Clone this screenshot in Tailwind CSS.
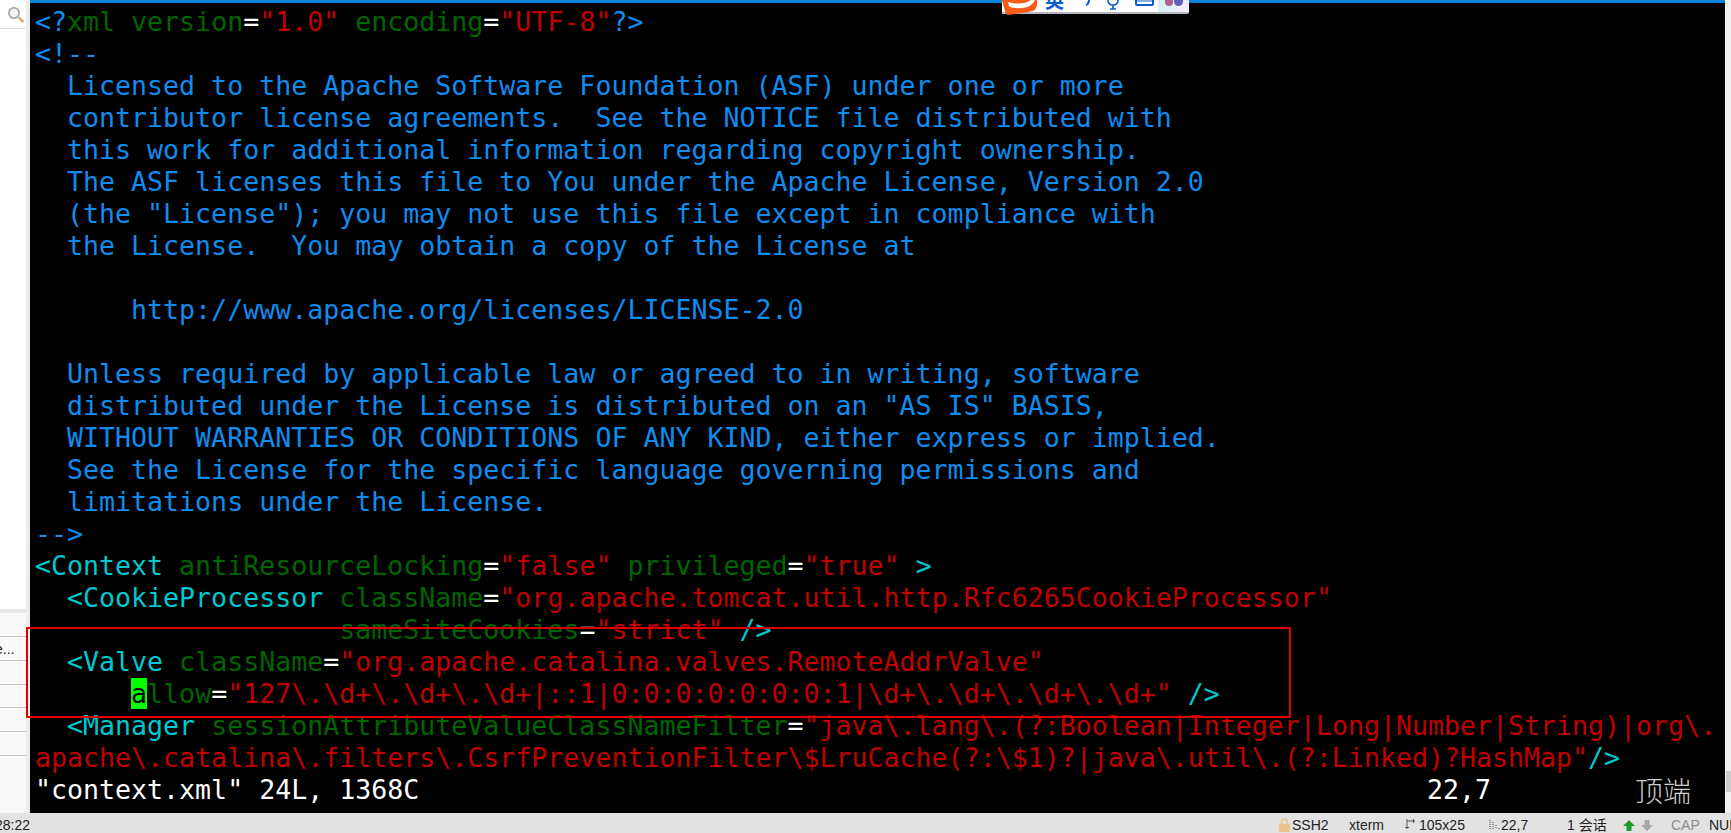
<!DOCTYPE html>
<html>
<head>
    <meta charset="utf-8">
    <title>context.xml - xterm</title>
    <script src="https://cdn.jsdelivr.net/npm/@tailwindcss/browser@4"></script>
</head>
<body class="relative h-[833px] w-[1731px] overflow-hidden bg-white font-['Liberation_Sans',sans-serif]">
    <div class="flex h-[813px]">
        <aside class="w-[30px] shrink-0 flex flex-col bg-white border-r-4 border-[#ececec] overflow-hidden">
            <div class="h-[29px] shrink-0 border-b border-[#e0e0e0] pl-[8px] pt-[7px]">
                <svg width="18" height="18" viewBox="0 0 18 18" class="block">
                    <circle cx="6" cy="6" r="5.2" fill="#f2f2f2" stroke="#a0a0a0" stroke-width="1.6"/>
                    <path d="M10.5 10.5l5 4.5" stroke="#d8a878" stroke-width="2.4"/>
                </svg>
            </div>
            <div class="h-[580px] shrink-0"></div>
            <div class="flex-1 bg-[#f9f9f9] border-t-4 border-[#e8e8e8] flex flex-col">
                <div class="h-[24px] shrink-0 border-b border-[#c4c4c4]"></div>
                <div class="h-[24px] shrink-0 border-b border-[#c4c4c4] text-[14px] leading-[24px] text-[#222] whitespace-nowrap ml-[-5px]">e...</div>
                <div class="h-[24px] shrink-0 border-b border-[#c4c4c4]"></div>
                <div class="h-[23px] shrink-0 border-b border-[#c4c4c4]"></div>
                <div class="h-[24px] shrink-0 border-b border-[#c4c4c4]"></div>
                <div class="h-[24px] shrink-0 border-b border-[#c4c4c4]"></div>
            </div>
        </aside>
        <main class="flex-1 bg-black border-t-[3px] border-[#0a84d8] pl-[5px] pt-[3px] font-['DejaVu_Sans_Mono',monospace] text-[26.6px] leading-[32px] text-[#0f8cf0] *:whitespace-pre *:h-[32px]">
            <div>&lt;?<span class="text-[#006400]">xml version</span><span class="text-white">=</span><span class="text-[#c00000]">"1.0"</span> <span class="text-[#006400]">encoding</span><span class="text-white">=</span><span class="text-[#c00000]">"UTF-8"</span>?&gt;</div>
            <div>&lt;!--</div>
            <div>  Licensed to the Apache Software Foundation (ASF) under one or more</div>
            <div>  contributor license agreements.  See the NOTICE file distributed with</div>
            <div>  this work for additional information regarding copyright ownership.</div>
            <div>  The ASF licenses this file to You under the Apache License, Version 2.0</div>
            <div>  (the "License"); you may not use this file except in compliance with</div>
            <div>  the License.  You may obtain a copy of the License at</div>
            <div></div>
            <div>      http://www.apache.org/licenses/LICENSE-2.0</div>
            <div></div>
            <div>  Unless required by applicable law or agreed to in writing, software</div>
            <div>  distributed under the License is distributed on an "AS IS" BASIS,</div>
            <div>  WITHOUT WARRANTIES OR CONDITIONS OF ANY KIND, either express or implied.</div>
            <div>  See the License for the specific language governing permissions and</div>
            <div>  limitations under the License.</div>
            <div>--&gt;</div>
            <div class="text-[#00c8d0]">&lt;Context <span class="text-[#006400]">antiResourceLocking</span><span class="text-white">=</span><span class="text-[#c00000]">"false"</span> <span class="text-[#006400]">privileged</span><span class="text-white">=</span><span class="text-[#c00000]">"true"</span> &gt;</div>
            <div class="text-[#00c8d0]">  &lt;CookieProcessor <span class="text-[#006400]">className</span><span class="text-white">=</span><span class="text-[#c00000]">"org.apache.tomcat.util.http.Rfc6265CookieProcessor"</span></div>
            <div class="text-[#00c8d0]">                   <span class="text-[#006400]">sameSiteCookies</span><span class="text-white">=</span><span class="text-[#c00000]">"strict"</span> /&gt;</div>
            <div class="text-[#00c8d0]">  &lt;Valve <span class="text-[#006400]">className</span><span class="text-white">=</span><span class="text-[#c00000]">"org.apache.catalina.valves.RemoteAddrValve"</span></div>
            <div class="text-[#00c8d0]">      <span class="bg-[#00ff00] text-black">a</span><span class="text-[#006400]">llow</span><span class="text-white">=</span><span class="text-[#c00000]">"127\.\d+\.\d+\.\d+|::1|0:0:0:0:0:0:0:1|\d+\.\d+\.\d+\.\d+"</span> /&gt;</div>
            <div class="text-[#00c8d0]">  &lt;Manager <span class="text-[#006400]">sessionAttributeValueClassNameFilter</span><span class="text-white">=</span><span class="text-[#c00000]">"java\.lang\.(?:Boolean|Integer|Long|Number|String)|org\.</span></div>
            <div class="text-[#00c8d0]"><span class="text-[#c00000]">apache\.catalina\.filters\.CsrfPreventionFilter\$LruCache(?:\$1)?|java\.util\.(?:Linked)?HashMap"</span>/&gt;</div>
            <div class="flex text-white">
                <span class="w-[1392px]">"context.xml" 24L, 1368C</span><span class="w-[208px]">22,7</span><span class="font-['Noto_Sans_CJK_SC',sans-serif] font-light text-[#cfcfcf] text-[28px]">顶端</span>
            </div>
        </main>
        <div class="w-[6px] shrink-0 bg-[#f0f0f0] flex flex-col justify-end pb-[21px] pl-[1px]">
            <div class="h-[21px] bg-[#cdcdcd]"></div>
        </div>
    </div>

    <footer class="relative h-[20px] bg-[#e2e2e2] text-[14px] leading-[24px] text-[#222] whitespace-nowrap">
        <span class="absolute left-[-5px]">28:22</span>
        <svg class="absolute left-[1279px] top-[5px]" width="11" height="14" viewBox="0 0 11 14"><path d="M2.5 6V4a3 3 0 0 1 6 0v2" fill="none" stroke="#ecc48c" stroke-width="1.6"/><rect y="6" width="11" height="8" rx="1.5" fill="#ecc48c"/></svg>
        <span class="absolute left-[1292px]">SSH2</span>
        <span class="absolute left-[1349px]">xterm</span>
        <svg class="absolute left-[1405px] top-[6px]" width="10" height="12" viewBox="0 0 10 12"><path d="M2 0v10M0 8.500h4M10 2H2M8.500 0v4" fill="none" stroke="#555" stroke-width="1"/></svg>
        <span class="absolute left-[1419px]">105x25</span>
        <svg class="absolute left-[1489px] top-[7px]" width="11" height="10" viewBox="0 0 11 10"><path d="M1 0v9M4 2v7M7 5v4M10 8v1" fill="none" stroke="#777" stroke-width="1.500" stroke-dasharray="1 1"/></svg>
        <span class="absolute left-[1501px]">22,7</span>
        <span class="absolute left-[1567px] font-['Liberation_Sans','Noto_Sans_CJK_SC',sans-serif]">1 会话</span>
        <svg class="absolute left-[1623px] top-[7px]" width="12" height="11" viewBox="0 0 12 11"><path d="M6 0l6 6H8.500v5h-5V6H0z" fill="#1a9a28"/></svg>
        <svg class="absolute left-[1641px] top-[7px]" width="12" height="11" viewBox="0 0 12 11"><path d="M6 11L0 5h3.500V0h5v5H12z" fill="#a8a8a8"/></svg>
        <span class="absolute left-[1671px] text-[#8c8c8c]">CAP</span>
        <span class="absolute left-[1709px]">NUM</span>
    </footer>

    <div class="absolute left-[26px] top-[627px] w-[1265px] h-[91px] border-2 border-[#dd0000]"></div>

    <div class="absolute left-[1002px] top-0 w-[187px] h-[14px] bg-white rounded-br-[2px] border-b-2 border-[#b4b8bc]">
        <svg class="absolute left-0 top-0" width="36" height="15" viewBox="0 0 36 15">
            <path d="M0 0H35Q36 8 31 11Q20 13 6 15Q4 15 3 11z" fill="#f95a15"/>
            <path d="M6 2Q20 6 29 0H33Q30 7 20 8Q10 9 7 6z" fill="#fff"/>
        </svg>
        <div class="absolute left-[43px] top-0 w-[20px] h-[12px] overflow-hidden">
            <span class="absolute top-[-10px] text-[19px] leading-[20px] font-bold text-[#0a5cc8] font-['Noto_Sans_CJK_SC',sans-serif]">英</span>
        </div>
        <svg class="absolute left-[80px] top-0" width="74" height="12" viewBox="0 0 74 12">
            <path d="M7 0q0 4-3 5" fill="none" stroke="#0a5cc8" stroke-width="2"/>
            <path d="M26 0q0 5 5 5t5-5M31 5v4M28 9h6" fill="none" stroke="#0a5cc8" stroke-width="1.600"/>
            <rect x="54" y="-3" width="17" height="8" rx="1" fill="none" stroke="#0a5cc8" stroke-width="2"/>
            <path d="M54 1h17" stroke="#0a5cc8" stroke-width="1"/>
        </svg>
        <div class="absolute right-0 top-0 w-[31px] h-[12px] bg-gradient-to-r from-[#d4f2f6] to-[#f8eaf8]">
            <span class="absolute left-[7px] top-[-4px] w-[8px] h-[10px] rounded-full bg-[#b0608c]"></span>
            <span class="absolute left-[16px] top-[-4px] w-[9px] h-[10px] rounded-full bg-[#6060b8]"></span>
        </div>
    </div>
</body>
</html>
